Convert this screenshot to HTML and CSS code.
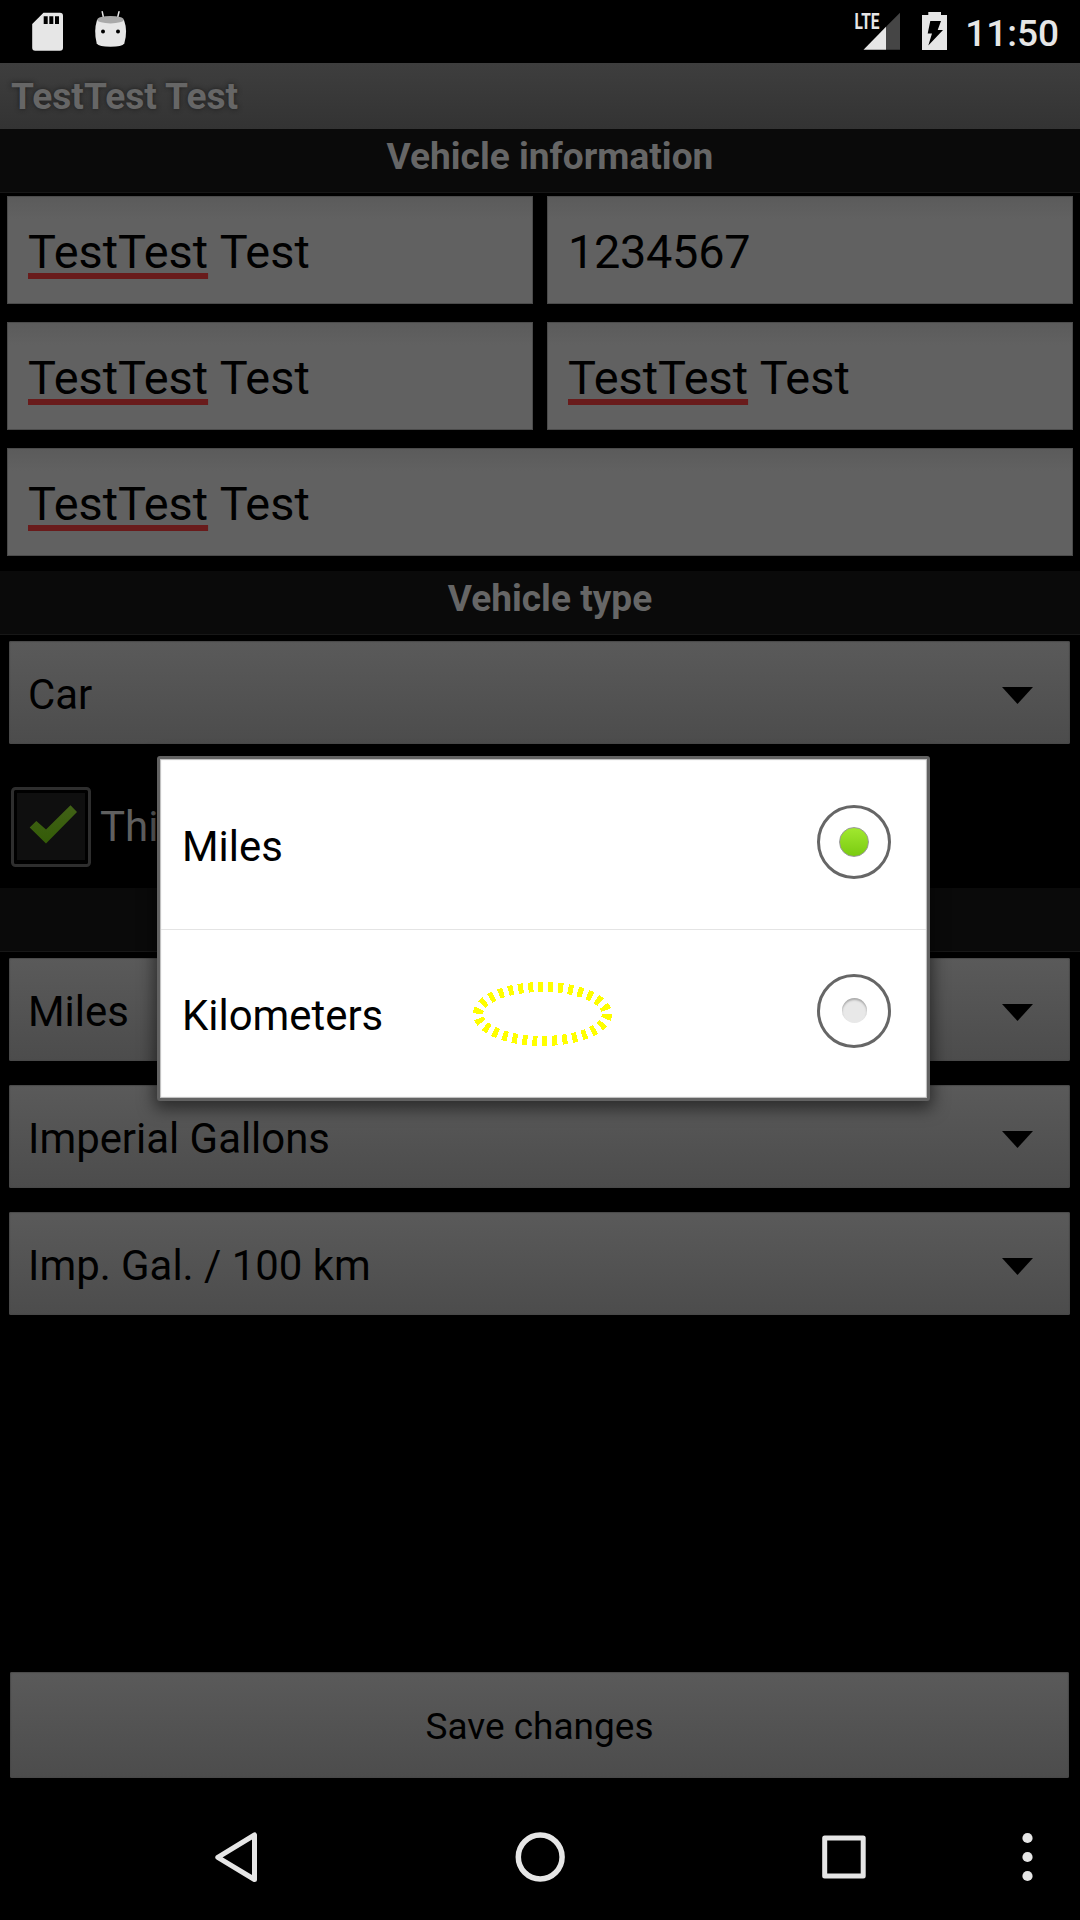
FILE: index.html
```html
<!DOCTYPE html>
<html lang="en">
<head>
<meta charset="utf-8">
<title>TestTest Test</title>
<link rel="stylesheet" href="styles.css">
</head>
<body>
<div class="screen">
  <header class="status">
    <svg class="status-left" width="140" height="63" viewBox="0 0 140 63">
      <path fill="#e6e6e6" fill-rule="evenodd" d="M43.5 12.7H60a3 3 0 0 1 3 3V47.700a3 3 0 0 1-3 3H35.200a3 3 0 0 1-3-3V24ZM43.700 16.300V24H47.700V16.300ZM49.300 16.300V24H53.300V16.300ZM55 16.300V24H59V16.300Z"/>
      <path d="M102.200 11.700 104 20M119 11.700 117 20" stroke="#e6e6e6" stroke-width="1.500" stroke-linecap="round"/>
      <path fill="#e6e6e6" d="M97 20H124Q128 31 124.300 43.500Q122 46.700 110.500 46.700Q99 46.700 96.700 43.500Q93.500 31 97 20Z"/>
      <ellipse cx="110.500" cy="19.700" rx="13.300" ry="3.700" fill="#a9a9a9"/>
      <circle cx="103" cy="31.500" r="2"/><circle cx="118" cy="31.500" r="2"/>
    </svg>
    <div class="status-right">
      <svg width="100" height="63" viewBox="852 0 100 63">
        <path fill="#454545" d="M900 12.700V49.700H886V26.700Z"/>
        <path fill="#e6e6e6" d="M886 26.700V49.700H863.500Z"/>
        <text class="lte" x="854.500" y="29" textLength="25" lengthAdjust="spacingAndGlyphs">LTE</text>
        <path fill="#e6e6e6" d="M928.300 12H941V15H947V50H922V15H928.300Z"/>
        <path fill="#000" d="M930.300 21H941L937.700 30H943L928.300 45.500L932 33.500H927.700Z"/>
      </svg>
      <span class="clock">11:50</span>
    </div>
  </header>
  <div class="titlebar">TestTest Test</div>

  <main class="form">
    <h2 class="section">Vehicle information</h2>
    <div class="fields">
      <div class="input"><span class="typo">TestTest</span>&nbsp;Test</div>
      <div class="input number">1234567</div>
      <div class="input"><span class="typo">TestTest</span>&nbsp;Test</div>
      <div class="input"><span class="typo">TestTest</span>&nbsp;Test</div>
      <div class="input wide"><span class="typo">TestTest</span>&nbsp;Test</div>
    </div>
    <h2 class="section">Vehicle type</h2>
    <div class="spinners">
      <div class="spinner">Car<i class="arrow"></i></div>
    </div>
    <div class="check-row">
      <svg width="82" height="82" viewBox="10 786 82 82">
        <rect x="12.500" y="788.500" width="77" height="77" rx="3" fill="#000" stroke="#2e2e2e" stroke-width="3"/>
        <rect x="17" y="793" width="68" height="67" fill="#0f0f0f"/>
        <defs><linearGradient id="tick" x1="0" y1="0" x2="0" y2="1"><stop offset="0" stop-color="#416117"/><stop offset="1" stop-color="#345c07"/></linearGradient></defs>
        <path fill="url(#tick)" d="M29.700 827.500 36.300 821 46 829.500 70.500 805.300 77 812 46 843.500Z"/>
      </svg>
      <span>This</span>
    </div>
    <div class="section"></div>
    <div class="spinners">
      <div class="spinner">Miles<i class="arrow"></i></div>
      <div class="spinner">Imperial Gallons<i class="arrow"></i></div>
      <div class="spinner">Imp. Gal. / 100 km<i class="arrow"></i></div>
    </div>
    <div class="save">Save changes</div>
  </main>

  <nav class="nav">
    <svg width="1080" height="126" viewBox="0 1794 1080 126" fill="none" stroke="#e6e6e6" stroke-width="5" stroke-linejoin="round">
      <path d="M254.500 1835V1879.500L217.800 1857.300Z"/>
      <circle cx="540.200" cy="1857" r="21.900" stroke-width="5.500"/>
      <rect x="824.700" y="1838" width="38.500" height="38"/>
      <g fill="#e6e6e6" stroke="none"><circle cx="1027.500" cy="1838" r="5.100"/><circle cx="1027.500" cy="1857" r="5.100"/><circle cx="1027.500" cy="1876" r="5.100"/></g>
    </svg>
  </nav>

  <div class="dialog">
    <div class="option">Miles<i class="radio on"></i></div>
    <div class="option">Kilometers<i class="radio"></i></div>
    <svg class="touch" width="144" height="70" viewBox="0 0 144 70">
      <ellipse cx="72.500" cy="35" rx="64.500" ry="27" fill="none" stroke="#ff0" stroke-width="10" stroke-dasharray="5 5" shape-rendering="crispEdges"/>
    </svg>
  </div>
</div>
</body>
</html>
```
FILE: styles.css
```css
* { box-sizing: border-box; }

body {
  margin: 0;
  background: #000;
  font-family: Roboto, "Liberation Sans", sans-serif;
}

.screen {
  position: relative;
  width: 1080px;
  height: 1920px;
  display: flex;
  flex-direction: column;
  overflow: hidden;
  background: #000;
}

.status {
  height: 63px;
  display: flex;
  justify-content: space-between;
  color: #e6e6e6;
}

.status-right { display: flex; padding-right: 21px; }
.status svg { display: block; }
.lte { font: 700 22px Roboto, sans-serif; fill: #e6e6e6; }

.clock {
  width: 107px;
  text-align: right;
  font-size: 37px;
  font-weight: 500;
  line-height: 67px;
}

.titlebar {
  height: 66px;
  padding-left: 11px;
  background: linear-gradient(#3e3e3e, #333);
  color: #666;
  font-size: 37.1px;
  font-weight: 700;
  line-height: 68px;
  text-shadow: 0 0 5px #1c1c1c;
}

.form {
  flex: 1;
  display: flex;
  flex-direction: column;
}

.section {
  height: 64px;
  margin: 0;
  padding-left: 20px;
  background: #0a0a0a;
  border-bottom: 1px solid #171717;
  color: #666;
  font-size: 37.1px;
  font-weight: 700;
  line-height: 56px;
  text-align: center;
}

.fields {
  display: grid;
  grid-template-columns: 526px 526px;
  gap: 18px 14px;
  padding: 3px 7px 15px;
}

.input {
  height: 108px;
  display: flex;
  align-items: center;
  padding: 4px 20px 0;
  border: 1px solid #4b4b4b;
  background: linear-gradient(#5b5b5b, #616161 22px);
  color: #000;
  font-size: 46.85px;
}

.number { letter-spacing: -.3px; }
.wide { grid-column: 1 / 3; }

.typo {
  text-decoration: underline #691b1b 6px;
  text-decoration-skip-ink: none;
  text-underline-offset: 5px;
}

.spinners {
  display: flex;
  flex-direction: column;
  gap: 24px;
  padding: 6px 10px 0 9px;
}

.spinner {
  height: 103px;
  display: flex;
  align-items: center;
  justify-content: space-between;
  padding: 4px 37px 0 19px;
  border-radius: 2px;
  background: linear-gradient(#5a5a5a, #4c4c4c);
  box-shadow: inset 0 0 1px 1px #494949;
  color: #000;
  font-size: 41.9px;
}

.arrow {
  width: 31px;
  height: 17px;
  margin-top: 2px;
  background: #000;
  clip-path: polygon(0 0, 100% 0, 50% 100%);
}

.check-row {
  height: 144px;
  display: flex;
  align-items: center;
  gap: 8px;
  padding: 22px 0 0 10px;
  color: #606060;
  font-size: 42px;
}

.check-row svg { margin-top: -1px; }
.check-row span { margin-top: -2px; }

.save {
  height: 106px;
  margin: auto 11px 16px 10px;
  border-radius: 2px;
  background: linear-gradient(#5a5a5a, #4c4c4c);
  box-shadow: inset 0 0 1px 1px #494949;
  color: #000;
  font-size: 37px;
  line-height: 109px;
  text-align: center;
}

.nav { height: 126px; }
.nav svg { display: block; }

.dialog {
  position: absolute;
  left: 157px;
  top: 756px;
  width: 773px;
  height: 345px;
  border: 3px solid #626262;
  border-radius: 3px;
  background: #fff;
  box-shadow: 0 5px 16px 3px rgba(0, 0, 0, .5), inset 0 0 1px 1px #bbb;
}

.option {
  height: 170px;
  display: flex;
  align-items: center;
  justify-content: space-between;
  padding: 5px 36px 0 22px;
  color: #000;
  font-size: 41.9px;
}

.option + .option {
  height: 169px;
  margin: 0 1px;
  padding: 4px 35px 0 21px;
  box-shadow: inset 0 1px #e4e4e4;
}

.radio {
  width: 74px;
  height: 74px;
  margin-top: -10px;
  display: grid;
  place-items: center;
  border: 3px solid #666;
  border-radius: 50%;
}

.radio::before {
  content: "";
  width: 25px;
  height: 25px;
  border-radius: 50%;
  background: #e8e8e8;
  box-shadow: inset 0 2px 2px #aaa;
}

.radio.on::before {
  width: 28px;
  height: 28px;
  border: 1px solid #999;
  background: linear-gradient(#a1e82f, #7acb11);
  box-shadow: none;
}

.touch {
  position: absolute;
  left: 310px;
  top: 220px;
}
```
